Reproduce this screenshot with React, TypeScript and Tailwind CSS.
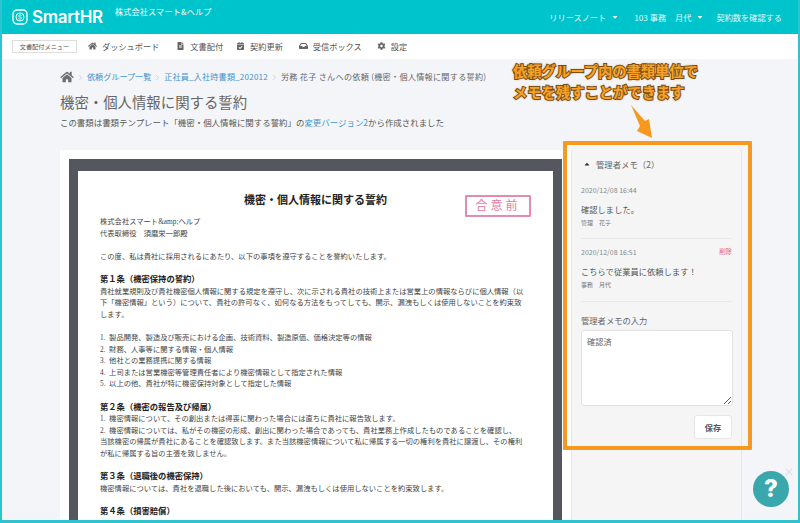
// SmartHR document request detail with the admin memo panel highlighted.
import { ChevronRight, X } from 'lucide-react';
import { FaCalendarCheck, FaCaretDown, FaCaretUp, FaCog, FaFileAlt, FaHome, FaInbox } from 'react-icons/fa';

const navItems = [
  { label: 'ダッシュボード', icon: FaHome, ml: 'ml-[11px]' },
  { label: '文書配付', icon: FaFileAlt, ml: 'ml-[17px]' },
  { label: '契約更新', icon: FaCalendarCheck, ml: 'ml-[13px]' },
  { label: '受信ボックス', icon: FaInbox, ml: 'ml-[16px]' },
  { label: '設定', icon: FaCog, ml: 'ml-[15px]' },
];

// h = article heading, '' = blank line
const docLines = [
  '株式会社スマート&amp;ヘルプ',
  '代表取締役　須磨栄一郎殿',
  '',
  'この度、私は貴社に採用されるにあたり、以下の事項を遵守することを誓約いたします。',
  '',
  'h第１条（機密保持の誓約）',
  '貴社就業規則及び貴社機密個人情報に関する規定を遵守し、次に示される貴社の技術上または営業上の情報ならびに個人情報（以',
  '下「機密情報」という）について、貴社の許可なく、如何なる方法をもってしても、開示、漏洩もしくは使用しないことを約束致',
  'します。',
  '',
  '1.  製品開発、製造及び販売における企画、技術資料、製造原価、価格決定等の情報',
  '2.  財務、人事等に関する情報・個人情報',
  '3.  他社との業務提携に関する情報',
  '4.  上司または営業機密等管理責任者により機密情報として指定された情報',
  '5.  以上の他、貴社が特に機密保持対象として指定した情報',
  '',
  'h第２条（機密の報告及び帰属）',
  '1.  機密情報について、その創出または得喪に関わった場合には直ちに貴社に報告致します。',
  '2.  機密情報については、私がその機密の形成、創出に関わった場合であっても、貴社業務上作成したものであることを確認し、',
  '当該機密の帰属が貴社にあることを確認致します。また当該機密情報について私に帰属する一切の権利を貴社に譲渡し、その権利',
  'が私に帰属する旨の主張を致しません。',
  '',
  'h第３条（退職後の機密保持）',
  '機密情報については、貴社を退職した後においても、開示、漏洩もしくは使用しないことを約束致します。',
  '',
  'h第４条（損害賠償）',
];

function Crumb({ children }: { children: React.ReactNode }) {
  return (
    <>
      <ChevronRight className="mx-[2px] h-[9px] w-[9px] text-[#c4c8d0]" />
      {children}
    </>
  );
}

function Memo({ date, text, name, canDelete }: { date: string; text: string; name: string; canDelete?: boolean }) {
  return (
    <>
      <div className="flex h-[10px] items-center justify-between text-[7px] leading-[10px] text-[#888]">
        <span>{date}</span>
        {canDelete && <span className="text-[6.4px] text-[#e0607a]">削除</span>}
      </div>
      <div className="mt-[8px] h-[12px] text-[8.2px] leading-[12px] tracking-[0.1px] text-[#555]">{text}</div>
      <div className="mt-[3px] h-[10px] text-[6px] leading-[10px] text-[#777]">{name}</div>
    </>
  );
}

export default function App() {
  return (
    <div className="relative flex h-[523px] w-[800px] flex-col overflow-hidden border-r-2 border-b-[3px] border-l-[2px] border-[#2cc5cf] bg-[#f4f5f9] font-['Noto_Sans_CJK_JP','Noto_Sans',sans-serif] text-[#666]">
      <header className="-mx-[2px] flex h-[34px] shrink-0 items-center bg-[#00c4cc] pr-[18px] pl-[12px] text-white">
        <svg viewBox="0 0 16 16" className="h-[16px] w-[16px]" fill="none">
          <rect x="1" y="1" width="14" height="14" rx="4" stroke="white" strokeWidth="1.3" />
          <circle cx="8" cy="8" r="4" stroke="white" strokeWidth="1" />
          <path d="M9.6 6.6C9 5.9 6.6 5.8 6.5 7c-.1 1.300 3.100.8 3 2.100-.1 1.200-2.500 1.100-3.100.3" stroke="white" strokeWidth=".8" />
        </svg>
        <span className="ml-[4px] font-['Inter',sans-serif] text-[17px] leading-none font-semibold tracking-[-0.3px]">SmartHR</span>
        <span className="mt-[-9px] ml-[12px] text-[8.1px] tracking-[0.2px]">株式会社スマート&amp;ヘルプ</span>
        <div className="ml-auto flex items-center text-[8.2px] text-[#e4f8f9]">
          <span>リリースノート</span>
          <FaCaretDown className="ml-[5px] h-[8px] w-[8px]" />
          <span className="ml-[15px]">103 事務</span>
          <span className="ml-[9px]">月代</span>
          <FaCaretDown className="ml-[5px] h-[8px] w-[8px]" />
          <span className="ml-[12px]">契約数を確認する</span>
        </div>
      </header>

      <nav className="flex h-[25px] shrink-0 items-center bg-white pl-[10px] text-[8.2px] text-[#555]">
        <span className="flex h-[13px] w-[65px] items-center justify-center border border-[#ddd] text-[6.2px] text-[#555]">文書配付メニュー</span>
        {navItems.map(({ label, icon: Icon, ml }) => (
          <span key={label} className={`flex items-center ${ml}`}>
            <Icon className="mr-[5px] h-[8px] w-[9px] text-[#666]" />
            {label}
          </span>
        ))}
      </nav>

      <main className="flex min-h-0 flex-1 flex-col pl-[58px]">
        <div className="mt-[12px] flex h-[12px] items-center text-[8.1px] whitespace-nowrap">
          <FaHome className="h-[12px] w-[14px] text-[#6b6f76]" />
          <Crumb><span className="text-[#3f93cf]">依頼グループ一覧</span></Crumb>
          <Crumb><span className="tracking-[0.18px] text-[#3f93cf]">正社員_入社時書類_202012</span></Crumb>
          <Crumb><span className="tracking-[0.3px]">労務 花子 さんへの依頼 (機密・個人情報に関する誓約)</span></Crumb>
        </div>
        <h1 className="mt-[9px] h-[20px] text-[14.4px] leading-[20px] font-normal text-[#666]">機密・個人情報に関する誓約</h1>
        <p className="mt-[4px] h-[12px] text-[8.45px] leading-[12px] whitespace-nowrap text-[#555]">
          この書類は書類テンプレート「機密・個人情報に関する誓約」の<span className="text-[#3f93cf]">変更バージョン2</span>から作成されました
        </p>

        <div className="mt-[22px] flex min-h-0 w-[682px] flex-1 bg-white pt-[9px] pl-[9px]">
          <div className="flex w-[493px] shrink-0 flex-col overflow-hidden bg-[#54585e] px-[9px] pt-[12px]">
            <div className="relative flex-1 bg-white pt-[21px] pl-[22px] font-['Liberation_Serif','Noto_Sans_CJK_JP',serif] whitespace-nowrap text-[#444]">
              <div className="mb-[8px] h-[16px] pr-[22px] text-center text-[11px] leading-[16px] font-bold text-[#222]">機密・個人情報に関する誓約</div>
              <div className="absolute top-[24px] right-[22px] flex h-[22px] w-[66px] items-center justify-center rounded-[1px] border-2 border-[#e58ab0] text-[12px] tracking-[3px] text-[#e27ba6]">合意前</div>
              {docLines.map((line, i) =>
                line.startsWith('h') ? (
                  <div key={i} className="h-[11.6px] text-[8.3px] leading-[11.6px] font-bold text-[#222]">{line.slice(1)}</div>
                ) : (
                  <div key={i} className="h-[11.6px] text-[7.3px] leading-[11.6px] whitespace-pre">{line}</div>
                ),
              )}
            </div>
          </div>

          <aside className="-mt-[9px] ml-[9px] w-[171px] shrink-0 border-x border-[#e6e6e6] bg-[#f5f5f5] pr-[9px] pl-[9px]">
            <div className="mt-[8px] flex h-[12px] items-center text-[8.4px] text-[#666]">
              <FaCaretUp className="mr-[5px] ml-[2px] h-[8px] w-[8px] text-[#333]" />
              管理者メモ（2）
            </div>
            <div className="mt-[15px]">
              <Memo date="2020/12/08 16:44" text="確認しました。" name="管理　花子" />
            </div>
            <div className="mt-[10px] h-px bg-[#e9e9e9]" />
            <div className="mt-[8px]">
              <Memo date="2020/12/08 16:51" text="こちらで従業員に依頼します！" name="事務　月代" canDelete />
            </div>
            <div className="mt-[11px] h-px bg-[#e9e9e9]" />
            <div className="mt-[12px] h-[12px] text-[8.3px] leading-[12px] text-[#666]">管理者メモの入力</div>
            <textarea
              defaultValue="確認済"
              className="mt-[4px] block h-[76px] w-[152px] rounded-[3px] border border-[#e2e2e2] bg-white px-[5px] py-[4px] text-[8.2px] leading-[12px] text-[#666]"
            />
            <div className="mt-[9px] flex justify-end">
              <button className="h-[24px] w-[38px] rounded-[3px] border border-[#e6e6e6] bg-white text-[8.2px] font-bold text-[#555]">保存</button>
            </div>
          </aside>
        </div>
      </main>

      {/* annotation drawn over the screenshot */}
      <div className="absolute top-[141px] left-[561px] h-[309px] w-[189px] rounded-[1px] border-[4px] border-[#f7981f]" />
      <div className="absolute top-[60px] left-[511px] text-[14.3px] leading-[21px] font-bold whitespace-nowrap text-[#f8a126] [-webkit-text-stroke:2px_#6b430f] [paint-order:stroke_fill] [text-shadow:0_0_3px_#a8701c]">
        <div>依頼グループ内の書類単位で</div>
        <div>メモを残すことができます</div>
      </div>
      <svg viewBox="0 0 30 36" className="absolute top-[104px] left-[628px] h-[36px] w-[30px]">
        <path d="M1 1 L15 17 L19 15 L22 34 L7 27 L10 22 Z" fill="#f7981f" />
      </svg>

      {/* help button */}
      <button className="absolute top-[471px] left-[751px] flex h-[36px] w-[36px] items-center justify-center rounded-full bg-[#3aa7ad] font-['Inter',sans-serif] text-[24px] leading-none font-extrabold text-white">?</button>
      <X className="absolute top-[466px] left-[781px] h-[12px] w-[12px] text-[#dfe3e6]" strokeWidth={2.5} />
    </div>
  );
}
